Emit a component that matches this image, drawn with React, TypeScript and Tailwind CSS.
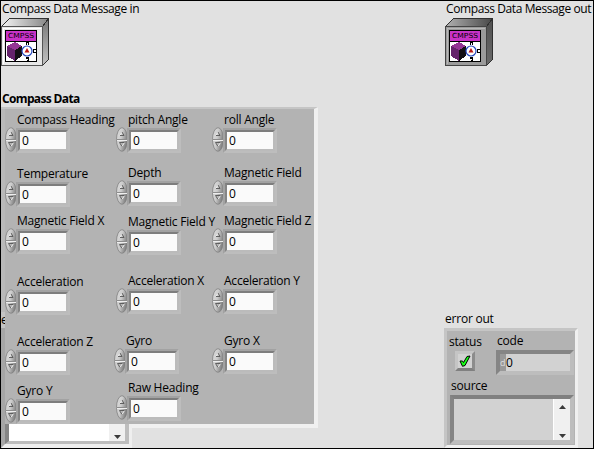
import React from 'react';

const labelBase =
  "block h-4 whitespace-nowrap font-['Open_Sans',sans-serif] text-[12px] leading-4 text-black";
const labelText = `${labelBase} tracking-[-0.22px]`;
const titleText = `${labelBase} tracking-[-0.4px]`;

function Spinner() {
  return (
    <svg className="h-[25px] w-3 shrink-0" viewBox="0 0 12 25">
      <defs>
        <linearGradient id="spin" x1="0" x2="1" y1="0" y2="0.4">
          <stop offset="0" stopColor="#dedede" />
          <stop offset="0.5" stopColor="#cccccc" />
          <stop offset="1" stopColor="#808080" />
        </linearGradient>
      </defs>
      <ellipse cx="6" cy="12.5" rx="5.5" ry="11.8" fill="url(#spin)" stroke="#808080" strokeWidth="0.8" />
      <path d="M1 12.5H11" stroke="#8c8c8c" />
      <path d="M1 13.5H11" stroke="#eee" />
      <path d="M4 8.5L6 5" stroke="#eeeeee" />
      <path d="M6 5L8 8.5H4" fill="none" stroke="#555" strokeWidth="0.9" />
      <path d="M8.5 15.5L6 19.5" stroke="#eeeeee" />
      <path d="M8.5 15.5H3.5L6 19.5" fill="none" stroke="#555" strokeWidth="0.9" />
    </svg>
  );
}

type FieldProps = { label: string; className?: string };

function Field({ label, className = '' }: FieldProps) {
  return (
    <div className={`h-[41px] ${className}`}>
      <span className={`${labelText} pl-3`}>{label}</span>
      <div className="flex h-[25px]">
        <div className="-mt-px">
          <Spinner />
        </div>
        <div className="-ml-px h-[25px] w-[54px] border-2 border-t-[#a2a2a2] border-r-[#bdbdbd] border-b-[#bdbdbd] border-l-[#a2a2a2]">
          <div className="h-[21px] w-[50px] border-2 border-t-[#7d7d7d] border-r-[#bbbbbb] border-b-[#bbbbbb] border-l-[#858585] bg-[#fafafa] pl-[2px] font-['Open_Sans',sans-serif] text-[12px] leading-[17px]">
            0
          </div>
        </div>
      </div>
    </div>
  );
}

function CompassIcon({ dark = false }: { dark?: boolean }) {
  const id = dark ? 'box-out' : 'box-in';
  return (
    <svg className="block h-12 w-12" viewBox="0 0 48 48" shapeRendering="crispEdges">
      <defs>
        <linearGradient id={`${id}-t`} x1="0" x2="1" y1="0" y2="0">
          <stop offset="0" stopColor={dark ? '#b0b0b0' : '#f4f4f4'} />
          <stop offset="1" stopColor={dark ? '#484848' : '#858585'} />
        </linearGradient>
        <linearGradient id={`${id}-r`} x1="0" x2="0" y1="0" y2="1">
          <stop offset="0" stopColor={dark ? '#505050' : '#777777'} />
          <stop offset="1" stopColor={dark ? '#6b6b6b' : '#c2c2c2'} />
        </linearGradient>
      </defs>
      <path d="M0.5 8.5L8.5 0.5H47.5L41.5 8.5Z" fill={`url(#${id}-t)`} stroke="#303030" />
      <path d="M41.5 8.5L47.5 0.5V41.5L41.5 47.5Z" fill={`url(#${id}-r)`} stroke="#303030" />
      <rect x="0.5" y="8.5" width="41" height="39" fill={dark ? '#9b9b9b' : '#e7e7e7'} stroke={dark ? '#444' : '#555'} />
      <path d="M2 46V10H40" fill="none" stroke={dark ? '#b7b7b7' : '#ffffff'} />
      <rect x="4.5" y="12.5" width="31" height="31" fill="white" stroke="black" />
      <rect x="5" y="13" width="30" height="10" fill="#c832c8" />
      <path d="M5 23.5H35" stroke="black" />
      <text x="7" y="20" textLength="26" lengthAdjust="spacingAndGlyphs" fontFamily="DejaVu Sans" fontSize="7" fill="black">
        CMPSS
      </text>
      <path d="M6 28L14 24L21 28L14 32Z" fill="#943594" />
      <path d="M6 28L14 32V43L6 38Z" fill="#65236b" />
      <path d="M14 32L21 28V38L14 43Z" fill="#141014" />
      <circle cx="26" cy="33" r="5" fill="white" stroke="#2345bd" strokeWidth="1.2" shapeRendering="auto" />
      <path d="M26 30L28.5 34.5H23.5Z" fill="#bc1715" shapeRendering="auto" />
      <path d="M25.5 27V24.5H27.5V27M35 31.5H32.5V34.5H35M27.5 39.5H25.5V40.5H27.5V42.5H25.5" fill="none" stroke="black" />
    </svg>
  );
}

function Arrow({ up = false }: { up?: boolean }) {
  return (
    <svg className="h-1 w-[7px]" viewBox="0 0 7 4">
      <path d={up ? 'M0 4L3.5 0L7 4Z' : 'M0 0H7L3.5 4Z'} fill="#3b3b3b" />
    </svg>
  );
}

/** The input error cluster: only its left edge and bottom show around the compass data panel. */
function ErrorIn() {
  return (
    <div className="absolute top-[311px] left-0 w-[131px] overflow-hidden bg-[#c4c4c4] [clip-path:polygon(0_0,4px_0,4px_112px,100%_112px,100%_100%,0_100%)]">
      <span className={labelText}>error in</span>
      <div className="flex h-[120px] flex-col justify-end border-r-[3px] border-b-[4px] border-l-[4px] border-r-[#efefef] border-b-[#efefef] border-l-[#a6a6a6] bg-[#b3b3b3]">
        <div className="flex h-[49px] w-[124px] border-4 border-b-[3px] border-t-[#808080] border-r-[#bdbdbd] border-b-[#bdbdbd] border-l-[#858585] bg-white">
          <div className="ml-auto flex w-4 flex-col items-center justify-end bg-[#f0f0f0] pb-[2px]">
            <Arrow />
          </div>
        </div>
      </div>
    </div>
  );
}

function CompassPanel() {
  return (
    <div className="h-[321px] w-[317px] border-t-2 border-r-4 border-b-4 border-t-[#c5c5c5] border-r-[#f0f0f0] border-b-[#f0f0f0]">
      <div className="flex h-[315px] border-l-4 border-l-[#b9b9b9] bg-[#b3b3b3] pt-[3px]">
        <div className="w-[111px] shrink-0">
          <Field label="Compass Heading" />
          <Field label="Temperature" className="mt-[13px]" />
          <Field label="Magnetic Field X" className="mt-[6px]" />
          <Field label="Acceleration" className="mt-5" />
          <Field label="Acceleration Z" className="mt-[19px]" />
          <Field label="Gyro Y" className="mt-2" />
        </div>
        <div className="w-[96px] shrink-0">
          <Field label="pitch Angle" />
          <Field label="Depth" className="mt-3" />
          <Field label="Magnetic Field Y" className="mt-2" />
          <Field label="Acceleration X" className="mt-[18px]" />
          <Field label="Gyro" className="mt-[19px] -ml-[2px]" />
          <Field label="Raw Heading" className="mt-[6px]" />
        </div>
        <div>
          <Field label="roll Angle" />
          <Field label="Magnetic Field" className="mt-3" />
          <Field label="Magnetic Field Z" className="mt-[7px]" />
          <Field label="Acceleration Y" className="mt-[19px]" />
          <Field label="Gyro X" className="mt-[19px]" />
        </div>
      </div>
    </div>
  );
}

function ErrorOut() {
  return (
    <div className="w-[134px]">
      <span className={`${labelText} pl-px`}>error out</span>
      <div className="mt-px h-[120px] border-[3px] border-t-[#c5c5c5] border-r-[#f0f0f0] border-b-[#f0f0f0] border-l-[#c5c5c5] bg-[#b3b3b3]">
        <div className="flex h-11">
          <div className="w-[49px] pt-[3px] pl-[2px]">
            <span className={labelText}>status</span>
            <div className="mt-px ml-[6px] flex h-5 w-5 items-center justify-center border-[3px] border-t-[#c5c5c5] border-r-[#8c8c8c] border-b-[#808080] border-l-[#c5c5c5] bg-[#d2d2d2]">
              <svg className="h-3 w-3" viewBox="0 0 12 12">
                <path d="M1 6L3.5 6L4.5 7.5L8 1.5L11 1L6 10.5L3.5 11.3Z" fill="#16ff16" stroke="black" strokeWidth="1" />
              </svg>
            </div>
          </div>
          <div className="pt-[2px]">
            <span className={`${labelText} pl-px`}>code</span>
            <div className="mt-px flex h-[25px] w-[78px] border-4 border-t-[#858585] border-r-[#bdbdbd] border-b-[#bdbdbd] border-l-[#858585] bg-[#d2d2d2] font-['Open_Sans',sans-serif] text-[12px] leading-[17px]">
              <span className="w-[6px] bg-[#999999] text-[9px] text-[#dddddd]">d</span>
              <span>0</span>
            </div>
          </div>
        </div>
        <div className="pt-[3px] pl-[3px]">
          <span className={`${labelText} pl-px`}>source</span>
          <div className="mt-px flex h-[49px] w-[124px] border-4 border-t-[#808080] border-r-[#bdbdbd] border-b-[#bdbdbd] border-l-[#858585] bg-[#d2d2d2]">
            <div className="ml-auto flex w-[17px] flex-col items-center justify-between border-l border-white bg-[#f0f0f0] pt-[6px] pb-[2px]">
              <Arrow up />
              <Arrow />
            </div>
          </div>
        </div>
      </div>
    </div>
  );
}

export default function App() {
  return (
    <main className="relative flex h-[449px] w-[594px] overflow-hidden border border-black bg-[#e1e1e1]">
      <section className="w-[443px] shrink-0">
        <span className={`${titleText} pl-px`}>Compass Data Message in</span>
        <div className="mt-px">
          <CompassIcon />
        </div>
        <span className={`${labelBase} mt-[25px] pl-px font-bold tracking-[-0.65px]`}>Compass Data</span>
        <CompassPanel />
      </section>
      <section className="flex w-[149px] flex-col">
        <span className={`${titleText} pl-[2px]`}>Compass Data Message out</span>
        <div className="mt-px ml-px h-[293px]">
          <CompassIcon dark />
        </div>
        <ErrorOut />
      </section>
      <ErrorIn />
    </main>
  );
}
